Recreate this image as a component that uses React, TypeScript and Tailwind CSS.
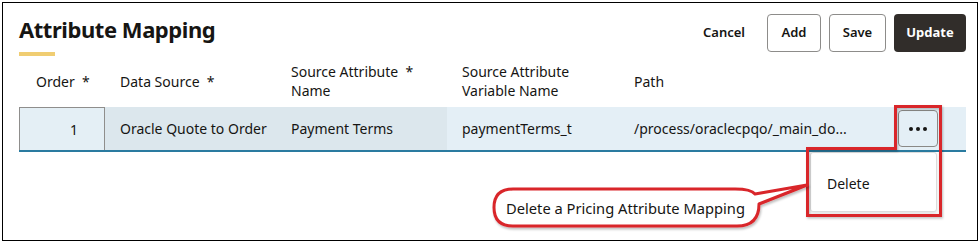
import React from "react";

const font = { fontFamily: '"Noto Sans", "Open Sans", sans-serif' };

const HeaderCell = ({ children, className = "" }: { children: React.ReactNode; className?: string }) => (
  <div className={`flex h-[45px] items-center pb-[7px] text-[14px] leading-[19px] text-[#161513] ${className}`}>{children}</div>
);

const Callout = () => (
  <div className="absolute left-[484px] top-[180px] h-[50px] w-[324px]">
    <svg width="324" height="50" className="absolute left-0 top-0">
      <defs>
        <filter id="sh" x="-5%" y="-20%" width="110%" height="150%">
          <feDropShadow dx="1" dy="2" stdDeviation="1.2" floodColor="#000" floodOpacity="0.25" />
        </filter>
      </defs>
      <path
        d="M26 6 H248 Q264 6 268 11 L320 2 L272 21 Q272 43 250 43 H26 Q7 43 7 24.5 Q7 6 26 6 Z"
        fill="#fff"
        stroke="#d9252b"
        strokeWidth="3"
        strokeLinejoin="round"
        filter="url(#sh)"
      />
    </svg>
    <span className="absolute left-[19px] top-[14px] text-[14.7px] leading-[22px] text-[#161513]">
      Delete a Pricing Attribute Mapping
    </span>
  </div>
);

export default function App() {
  return (
    <div style={font} className="ml-[2px] mt-[2px] relative h-[239px] w-[976px] border border-black bg-white">
      <div className="pl-[16px] pr-[11px]">
        <div className="flex items-start justify-between pt-[10px]">
          <div className="pt-[1px]">
            <h1 className="text-[22px] font-bold leading-[30px] tracking-[-0.45px] text-[#161513]">Attribute Mapping</h1>
            <div className="mt-[8px] h-[4px] w-[36px] bg-[#f0cd72]" />
          </div>
          <div className="flex items-center gap-[8px] pt-[1px] text-[13px] font-semibold text-[#161513]">
            <button className="h-[38px] px-[14px]">Cancel</button>
            <button className="h-[38px] w-[54px] rounded-[4px] border border-[#8d8c8a] bg-white">Add</button>
            <button className="h-[38px] w-[57px] rounded-[4px] border border-[#8d8c8a] bg-white">Save</button>
            <button className="h-[38px] w-[72px] rounded-[4px] bg-[#312d2a] font-bold text-white">Update</button>
          </div>
        </div>

        <div className="mt-[6px] grid grid-cols-[86px_171px_171px_172px_1fr_75px]">
          <HeaderCell className="pl-[17px]">Order&nbsp;&nbsp;*</HeaderCell>
          <HeaderCell className="pl-[15px]">Data Source&nbsp;&nbsp;*</HeaderCell>
          <HeaderCell className="pl-[15px]">
            <span>
              Source Attribute&nbsp;&nbsp;*
              <br />
              Name
            </span>
          </HeaderCell>
          <HeaderCell className="pl-[15px]">
            <span>
              Source Attribute
              <br />
              Variable Name
            </span>
          </HeaderCell>
          <HeaderCell className="pl-[15px]">Path</HeaderCell>
          <div />

          <div className="flex h-[43px] items-center justify-end border border-b-0 border-[#8f8e8c] bg-[#e4eff5] pr-[26px] text-[14px] text-[#161513]">
            1
          </div>
          <div className="flex h-[43px] items-center bg-[#dce7ed] pl-[15px] text-[14px] text-[#161513]">Oracle Quote to Order</div>
          <div className="flex h-[43px] items-center bg-[#dce7ed] pl-[15px] text-[14px] text-[#161513]">Payment Terms</div>
          <div className="flex h-[43px] items-center bg-[#e4eff6] pl-[15px] text-[14px] text-[#161513]">paymentTerms_t</div>
          <div className="flex h-[43px] items-center bg-[#e4eff6] pl-[15px] text-[14px] text-[#161513]">/process/oraclecpqo/_main_do...</div>
          <div className="flex h-[43px] items-center bg-[#e4eff6] pl-[7px]">
            <div className="flex h-[37px] w-[40px] items-center justify-center gap-[3px] rounded-[4px] border border-[#8a8986] bg-[#e4eff6]">
              <span className="h-[4px] w-[4px] rounded-full bg-[#161513]" />
              <span className="h-[4px] w-[4px] rounded-full bg-[#161513]" />
              <span className="h-[4px] w-[4px] rounded-full bg-[#161513]" />
            </div>
          </div>
          <div className="col-span-6 h-[2px] bg-[#2a7ba0]" />
        </div>
      </div>

      {/* dropdown menu */}
      <div className="absolute left-[807px] top-[149px] h-[60px] w-[127px] rounded-[3px] border border-[#dcdcdc] bg-white shadow-[0_2px_4px_rgba(0,0,0,0.12)]">
        <span className="absolute left-[16px] top-[21px] text-[14px] leading-[19px] text-[#161513]">Delete</span>
      </div>

      {/* red highlight */}
      <svg className="absolute left-[797px] top-[97px]" width="150" height="125">
        <defs>
          <filter id="sh2" x="-10%" y="-10%" width="120%" height="120%">
            <feDropShadow dx="1" dy="1.5" stdDeviation="1" floodColor="#000" floodOpacity="0.25" />
          </filter>
        </defs>
        <path
          d="M95.5 6.5 H140.5 V115.5 H7.5 V48.5 H95.5 Z"
          fill="none"
          stroke="#d9252b"
          strokeWidth="3"
          filter="url(#sh2)"
        />
      </svg>

      <Callout />
    </div>
  );
}
